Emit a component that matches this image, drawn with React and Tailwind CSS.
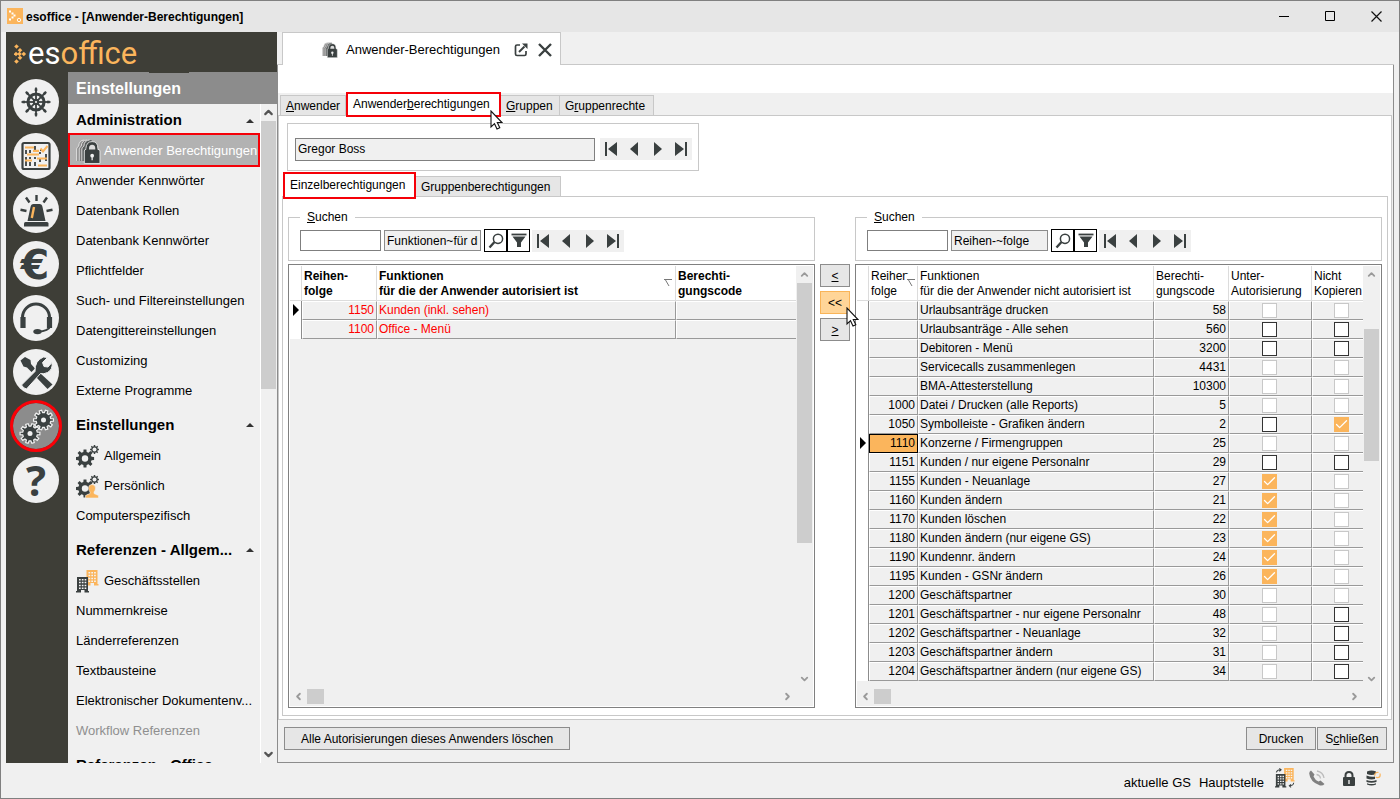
import React from "react";
import { Check, ChevronUp, ChevronDown, ChevronLeft, ChevronRight } from "lucide-react";

const DARK = "#3a4040";
const ORANGE = "#fbb55c";

function gearPath(cx, cy, outer, inner, teeth) {
  const pts = [];
  for (let i = 0; i < teeth; i++) {
    const a = (i * 2 * Math.PI) / teeth;
    const s = Math.PI / teeth;
    [
      [inner, -0.62],
      [outer, -0.4],
      [outer, 0.4],
      [inner, 0.62],
    ].forEach(([r, k]) => {
      pts.push(`${(cx + r * Math.cos(a + k * s)).toFixed(2)} ${(cy + r * Math.sin(a + k * s)).toFixed(2)}`);
    });
  }
  return `M${pts.join("L")}Z`;
}

function Gear({ cx, cy, r, hole, teeth = 8, fill = DARK, holeFill = "#f0f0f0", stroke = "none" }) {
  return (
    <>
      <path d={gearPath(cx, cy, r, r * 0.74, teeth)} fill={fill} stroke={stroke} strokeWidth="1.2" />
      <circle cx={cx} cy={cy} r={hole} fill={holeFill} />
    </>
  );
}

/* ---------- module icons ---------- */

function WheelIcon() {
  return (
    <g stroke={DARK} fill="none">
      <circle cx="23" cy="23" r="8" strokeWidth="3.2" />
      {[0, 45, 90, 135, 180, 225, 270, 315].map((a) => (
        <g key={a} transform={`rotate(${a} 23 23)`}>
          <path d="M23 21V8.500" strokeWidth="1.8" />
          <path d="M23 12V9.500" strokeWidth="2.6" />
        </g>
      ))}
      <circle cx="23" cy="23" r="3.2" fill={DARK} stroke="none" />
      <circle cx="23" cy="23" r="1.1" fill="#f0f0f0" stroke="none" />
    </g>
  );
}

function PlanIcon() {
  return (
    <g fill="none">
      <rect x="9.500" y="10" width="27" height="26" rx="1.500" stroke={DARK} strokeWidth="2.200" />
      <path d="M13 17V21M13 24V33M17 17V20M17 24V26M17 29V33M22 13V18M22 24V26M22 29V33M27 19V21M27 26V29M33 21V28M29 17H27" stroke={DARK} strokeWidth="1.800" />
      <path d="M12 14.500H21M14 21.500H26M24 25.500H34M12 27.500H19M25 32.500H34M20 17.800H26" stroke={ORANGE} strokeWidth="2.200" />
      <path d="M27.500 15.500L30 18.500L34.500 13" stroke={ORANGE} strokeWidth="2" />
    </g>
  );
}

function SirenIcon() {
  return (
    <g>
      <path d="M11 39.500V36.500Q11 35 12.500 35H34Q35.500 35 35.500 36.500V39.500Z" fill={DARK} />
      <path d="M14.500 34L17.500 20Q18 17 20.500 17H26.500Q29 17 29.500 20L32.500 34Z" fill={DARK} />
      <path d="M21 20L18.800 31" stroke={ORANGE} strokeWidth="2.400" />
      <path d="M23.500 14V8M16.500 15.500L13 10.500M30.500 15.500L34 10.500M13.500 24L7.500 22.800M33.500 24L39.500 22.800" stroke={DARK} strokeWidth="2.400" />
    </g>
  );
}

function EuroIcon() {
  return (
    <text x="22" y="38" textAnchor="middle" fontSize="41" fontWeight="700" fontFamily="'DejaVu Sans', sans-serif" fill={DARK}>
      €
    </text>
  );
}

function HeadsetIcon() {
  return (
    <g fill="none" stroke={DARK}>
      <path d="M9.500 24V22.500A13.500 13.500 0 0 1 36.500 22.500V24" strokeWidth="3" />
      <path d="M10 22V33M36.500 22V33" strokeWidth="5.200" />
      <path d="M37.500 31Q35.500 36 25 36.800" strokeWidth="2" />
      <ellipse cx="24.500" cy="36.600" rx="4.200" ry="2.600" fill={DARK} stroke="none" />
    </g>
  );
}

function ToolsIcon() {
  return (
    <g>
      <path d="M7.500 11.500L12 8L17.500 11L18 15L22 19.500L18.500 23L14 18.500L10.500 17.500Z" fill={DARK} />
      <path d="M27 24L39.500 35.500L34.500 40L23 28Z" fill={DARK} />
      <path d="M8.500 36L22 22.500Q21.500 11.500 30.500 8L34.500 8.500L29.500 13.500L31 17.500L35 18L39 13.500Q40 20.500 34.500 23.500Q30.500 25.500 27.500 24.500L13.500 40Q10.500 39.500 8.500 36Z" fill={DARK} stroke="#f0f0f0" strokeWidth="1" />
    </g>
  );
}

function GearsIcon() {
  return (
    <g>
      <Gear cx={30.5} cy={17} r={10} hole={2.5} teeth={10} stroke="#f0f0f0" />
      <Gear cx={17} cy={30.5} r={10} hole={2.5} teeth={10} stroke="#f0f0f0" />
    </g>
  );
}

function HelpIcon() {
  return (
    <text x="23" y="39" textAnchor="middle" fontSize="42" fontWeight="700" fontFamily="'Open Sans', sans-serif" fill={DARK}>
      ?
    </text>
  );
}

const modules = [
  { name: "Steuerung", Icon: WheelIcon },
  { name: "Planung", Icon: PlanIcon },
  { name: "Alarm", Icon: SirenIcon },
  { name: "Finanzen", Icon: EuroIcon },
  { name: "Service", Icon: HeadsetIcon },
  { name: "Werkzeuge", Icon: ToolsIcon },
  { name: "Einstellungen", Icon: GearsIcon, active: true },
  { name: "Hilfe", Icon: HelpIcon },
];

function ModuleBar() {
  return (
    <nav className="flex w-[62px] shrink-0 flex-col items-center gap-2 pt-[7px] pr-[2px]">
      {modules.map(({ name, Icon, active }) => (
        <button
          key={name}
          aria-label={name}
          className={
            active
              ? "size-[46px] shrink-0 rounded-full bg-[#8c8c8c] outline-3 outline-[#fb0007]"
              : "size-[46px] shrink-0 rounded-full bg-[#f0f0f0]"
          }
        >
          <svg viewBox="0 0 46 46" className="size-[46px] overflow-visible">
            <Icon />
          </svg>
        </button>
      ))}
    </nav>
  );
}

/* ---------- small icons ---------- */

function LockStack({ className }) {
  return (
    <svg viewBox="0 0 24 24" className={className}>
      {[
        [0, "#8c8c8c"],
        [2.5, "#777777"],
        [5, "#5a5f5f"],
      ].map(([dx, c]) => (
        <g key={dx}>
          <path d={`M${dx + 0.6} 21V9.500Q${dx + 0.8} 8 ${dx + 2.5} 7Q${dx + 3} 1 ${dx + 8} 1H${dx + 10}V21Z`} fill={c} />
          <path d={`M${dx + 0.6} 21V9.500Q${dx + 0.8} 8 ${dx + 2.5} 7Q${dx + 3} 1 ${dx + 8} 1`} fill="none" stroke="#e4e4e4" strokeWidth="0.9" />
        </g>
      ))}
      <path d="M8 23.500V11.500Q8 10 9.500 10V9Q10 2.500 15.500 2.500T21 9V10Q23 10 23 11.500V23.500Z" fill={DARK} stroke="#f0f0f0" strokeWidth="0.800" />
      <path d="M12.500 10V9Q12.500 5.500 15.500 5.500T18.500 9V10Z" fill="#dcdcdc" />
      <circle cx="15.500" cy="16" r="1.800" fill="#f0f0f0" />
      <path d="M14.900 16H16.100V20.500H14.900Z" fill="#f0f0f0" />
    </svg>
  );
}

function SettingsSmall({ person }) {
  return (
    <svg viewBox="0 0 23 23" className="size-[23px]">
      <Gear cx={9} cy={13.5} r={9.2} hole={3.2} />
      <Gear cx={18.5} cy={4.5} r={4.5} hole={2} />
      {person && (
        <path d="M16 9.500Q19.500 9.500 19.500 13Q19.500 15.500 18 17V18.500L22.500 20.500V23H9.500V20.500L14 18.500V17Q12.500 15.500 12.500 13Q12.500 9.500 16 9.500Z" fill={ORANGE} stroke="#f0f0f0" strokeWidth="0.600" />
      )}
    </svg>
  );
}

function Building({ x, y, fill }) {
  return (
    <g transform={`translate(${x} ${y})`}>
      <path d="M1 0H12V14H13V15.500H8.500V13H5V15.500H0V14H1Z" fill={fill} />
      <path d="M3 2.800H10.500M3 5.600H10.500M3 8.400H10.500M3 11.200H10.500" stroke="#f4f4f4" strokeWidth="1.500" strokeDasharray="1.700 1.100" />
    </g>
  );
}

function Buildings({ arrows }) {
  return (
    <svg viewBox="0 0 23 23" className={arrows ? "size-[20px]" : "size-[23px]"}>
      <Building x={9.5} y={0} fill={ORANGE} />
      <Building x={0} y={7} fill={DARK} />
      {arrows && <path d="M1.500 5Q2.500 2 6 2M5 0.500L7 2L5 3.800M21.500 17Q21 20.500 17 20.500M18.500 18.800L16.500 20.500L18.500 22.200" fill="none" stroke={DARK} strokeWidth="1.200" />}
    </svg>
  );
}

function Cursor({ className }) {
  return (
    <svg viewBox="0 0 13 20" className={className} aria-hidden="true">
      <path d="M1 1V17L4.500 13.700L7 19L9.800 17.700L7.300 12.500H12Z" fill="#fff" stroke="#111" strokeWidth="1.100" />
    </svg>
  );
}

/* ---------- sidebar ---------- */

const sections = [
  {
    title: "Administration",
    first: true,
    items: [
      { label: "Anwender Berechtigungen", icon: <LockStack className="size-[25px]" />, active: true },
      { label: "Anwender Kennwörter" },
      { label: "Datenbank Rollen" },
      { label: "Datenbank Kennwörter" },
      { label: "Pflichtfelder" },
      { label: "Such- und Filtereinstellungen" },
      { label: "Datengittereinstellungen" },
      { label: "Customizing" },
      { label: "Externe Programme" },
    ],
  },
  {
    title: "Einstellungen",
    items: [
      { label: "Allgemein", icon: <SettingsSmall /> },
      { label: "Persönlich", icon: <SettingsSmall person /> },
      { label: "Computerspezifisch" },
    ],
  },
  {
    title: "Referenzen - Allgem...",
    items: [
      { label: "Geschäftsstellen", icon: <Buildings /> },
      { label: "Nummernkreise" },
      { label: "Länderreferenzen" },
      { label: "Textbausteine" },
      { label: "Elektronischer Dokumentenv..." },
      { label: "Workflow Referenzen", muted: true },
    ],
  },
  { title: "Referenzen - Office", items: [] },
];

function NavItem({ label, icon, active, muted }) {
  if (active) {
    return (
      <a href="#berechtigungen" className="-my-[2px] flex h-[34px] shrink-0 items-center border-2 border-[#f50008] bg-[#b2b2b2] pt-[2px] pl-[6px] whitespace-nowrap text-white">
        <span className="flex w-7 shrink-0">{icon}</span>
        {label}
      </a>
    );
  }
  return (
    <a href="#eintrag" className={muted ? "flex h-[30px] shrink-0 items-center pt-[2px] pl-2 whitespace-nowrap text-[#8f8f8f]" : "flex h-[30px] shrink-0 items-center pt-[2px] pl-2 whitespace-nowrap"}>
      {icon && <span className="flex w-7 shrink-0">{icon}</span>}
      {label}
    </a>
  );
}

function Sidebar() {
  return (
    <aside className="flex w-[271px] shrink-0 flex-col bg-[#3e3e37]">
      <div className="flex h-10 shrink-0 items-center pt-1 pl-2">
        <svg viewBox="0 0 14 20" className="h-5 w-[14px]">
          {[[2.5, 2.5], [2.5, 17.5], [6, 6.2], [6, 13.8], [9.8, 10], [5.5, 10], [2, 10]].map(([x, y], i) => (
            <path key={i} d={`M${x - 2.3} ${y}L${x} ${y - 2.3}L${x + 2.3} ${y}L${x} ${y + 2.3}Z`} fill={ORANGE} />
          ))}
        </svg>
        <span className="font-[Roboto,sans-serif] text-[31px] leading-9 font-normal text-white">
          es<span className="text-[#fbb55c]">office</span>
        </span>
      </div>
      <div className="flex min-h-0 flex-1">
        <ModuleBar />
        <div className="flex min-w-0 flex-1 flex-col bg-[#f0f0f0]">
          <h1 className="relative flex h-8 shrink-0 items-center bg-[#8c8c8c] pt-[2px] pl-2 text-base font-bold text-white">
            Einstellungen
            <span className="absolute top-0 left-[81px] h-px w-10 bg-[#3e3e37]" />
          </h1>
          <div className="flex min-h-0 flex-1">
            <div className="flex min-w-0 flex-1 flex-col overflow-hidden border-r border-white text-[13px]">
              {sections.map((s) => (
                <React.Fragment key={s.title}>
                  <button
                    className={
                      s.first
                        ? "flex h-[31px] shrink-0 items-center justify-between pt-[2px] pr-[6px] pl-2 text-[15px] font-bold"
                        : "flex h-[35px] shrink-0 items-center justify-between pt-[5px] pr-[6px] pl-2 text-[15px] font-bold whitespace-nowrap"
                    }
                  >
                    {s.title}
                    <svg viewBox="0 0 8 4" className="h-1 w-2">
                      <path d="M0 4L4 0L8 4Z" fill="#333" />
                    </svg>
                  </button>
                  {s.items.map((it) => (
                    <NavItem key={it.label} {...it} />
                  ))}
                </React.Fragment>
              ))}
            </div>
            <div className="flex w-4 shrink-0 flex-col text-[#555]">
              <ChevronUp className="ml-px h-[17px] w-[13px] shrink-0" strokeWidth={4} />
              <div className="h-[268px] w-[15px] bg-[#cdcdcd]" />
              <ChevronDown className="mt-auto ml-px h-[17px] w-[13px] shrink-0" strokeWidth={4} />
            </div>
          </div>
        </div>
      </div>
    </aside>
  );
}

/* ---------- shared controls ---------- */

function RecordNav() {
  const shapes = [
    ["Erster", "M5 4H7V18H5ZM17 4V18L8 11Z"],
    ["Zurück", "M15 4V18L7 11Z"],
    ["Weiter", "M8 4V18L16 11Z"],
    ["Letzter", "M16 4H18V18H16ZM6 4V18L15 11Z"],
  ];
  return (
    <div className="flex shrink-0 bg-[#f0f0f0]">
      {shapes.map(([label, d]) => (
        <button key={label} aria-label={label} className="h-[22px] w-[23px]">
          <svg viewBox="0 0 23 22" className="h-[22px] w-[23px]">
            <path d={d} fill={DARK} />
          </svg>
        </button>
      ))}
    </div>
  );
}

function SearchBox({ id, field }) {
  return (
    <fieldset className="min-w-0 border border-[#c8c8c8] px-[11px] pt-[5px] pb-2">
      <legend className="px-[7px] leading-[14px]">
        <label htmlFor={id}>
          <u>S</u>uchen
        </label>
      </legend>
      <div className="flex items-center">
        <input id={id} className="h-[21px] w-[81px] border border-[#7f7f7f] bg-white px-[2px]" />
        <input aria-label="Suchfeld" readOnly value={field} className="ml-[3px] h-[21px] w-[97px] border border-[#8c8c8c] bg-[#f0f0f0] px-[2px]" />
        <button aria-label="Suchen" className="ml-[3px] flex h-[23px] w-[23px] items-center justify-center border border-black bg-white">
          <svg viewBox="0 0 16 16" className="size-4">
            <circle cx="10" cy="5.800" r="4.600" fill="none" stroke={DARK} strokeWidth="1.500" />
            <path d="M6.500 9L1.500 14.500" stroke={DARK} strokeWidth="2.400" />
          </svg>
        </button>
        <button aria-label="Filter" className="mr-[2px] flex h-[23px] w-[23px] items-center justify-center border border-black bg-white">
          <svg viewBox="0 0 16 16" className="size-4">
            <path d="M0.500 1.500H15.500" stroke={DARK} strokeWidth="1.800" />
            <path d="M1.500 3.500H14.500L10 9.500V14H6V9.500Z" fill={DARK} />
          </svg>
        </button>
        <RecordNav />
      </div>
    </fieldset>
  );
}

function GridFrame({ thumbClass, children }) {
  return (
    <div className="mt-[3px] flex min-h-0 flex-1 flex-col border border-[#808080] bg-white p-px">
      <div className="flex min-h-0 flex-1">
        <div className="min-w-0 flex-1 overflow-hidden bg-[#f0f0f0]">{children}</div>
        <div className="flex w-[17px] shrink-0 flex-col items-center bg-[#f0f0f0] text-[#9a9a9a]">
          <ChevronUp className="h-[17px] w-[11px] shrink-0" strokeWidth={4} />
          <div className={thumbClass} />
          <ChevronDown className="mt-auto h-4 w-[11px] shrink-0" strokeWidth={4} />
        </div>
      </div>
      <div className="flex h-[19px] shrink-0 items-center bg-[#f0f0f0] pr-[17px] text-[#9a9a9a]">
        <ChevronLeft className="h-[11px] w-[17px]" strokeWidth={4} />
        <div className="h-[15px] w-[17px] bg-[#cdcdcd]" />
        <ChevronRight className="ml-auto h-[11px] w-[17px]" strokeWidth={4} />
      </div>
    </div>
  );
}

function SortMark({ className }) {
  return (
    <svg viewBox="0 0 10 14" className={className} aria-hidden="true">
      <path d="M1 5.500H9M2.500 6L6 12" fill="none" stroke="#777" strokeWidth="1" />
    </svg>
  );
}

function Head({ lines, bold, last, children }) {
  return (
    <th
      className={
        (bold ? "font-bold " : "font-normal ") +
        (last ? "" : "border-r ") +
        "relative h-[35px] overflow-hidden border-b border-[#dcdcdc] bg-white p-0 pt-[2px] pl-[2px] text-left leading-[15px] whitespace-nowrap"
      }
    >
      {lines[0]}
      <br />
      {lines[1]}
      {children}
    </th>
  );
}

function Marker({ on }) {
  return (
    <td className="border-r border-[#8c8c8c] bg-white p-0">
      {on && (
        <svg viewBox="0 0 6 12" className="mb-[2px] ml-[3px] h-3 w-[6px]">
          <path d="M0 0L6 6L0 12Z" fill="#000" />
        </svg>
      )}
    </td>
  );
}

const cell = "h-[19px] overflow-hidden border-t border-r border-b border-l border-t-white border-r-[#999] border-b-[#999] border-l-white p-0 leading-[17px] whitespace-nowrap ";
const lastCell = "h-[19px] overflow-hidden border-t border-b border-l border-t-white border-b-[#999] border-l-white p-0 leading-[17px] whitespace-nowrap ";

/* ---------- authorised functions ---------- */

const granted = [
  ["1150", "Kunden (inkl. sehen)"],
  ["1100", "Office - Menü"],
];

function GrantedGrid() {
  return (
    <GridFrame thumbClass="h-[260px] w-[15px] bg-[#cdcdcd]">
      <table className="w-full table-fixed border-separate border-spacing-0">
        <colgroup>
          <col className="w-3" />
          <col className="w-[75px]" />
          <col />
          <col className="w-[120px]" />
        </colgroup>
        <thead>
          <tr>
            <Head lines={["", ""]} />
            <Head bold lines={["Reihen-", "folge"]} />
            <Head bold lines={["Funktionen", "für die der Anwender autorisiert ist"]}>
              <SortMark className="absolute top-2 right-[2px] h-[14px] w-[10px]" />
            </Head>
            <Head bold last lines={["Berechti-", "gungscode"]} />
          </tr>
        </thead>
        <tbody className="text-[#ff0000]">
          {granted.map(([nr, name], i) => (
            <tr key={nr}>
              <Marker on={i === 0} />
              <td className={cell + "pr-[2px] text-right"}>{nr}</td>
              <td className={cell + "pl-px"}>{name}</td>
              <td className={lastCell} />
            </tr>
          ))}
        </tbody>
      </table>
    </GridFrame>
  );
}

/* ---------- remaining functions: "-" locked, "o" open, "x" ticked ---------- */

const remaining = [
  ["", "Urlaubsanträge drucken", "58", "-", "-"],
  ["", "Urlaubsanträge - Alle sehen", "560", "o", "o"],
  ["", "Debitoren - Menü", "3200", "o", "o"],
  ["", "Servicecalls zusammenlegen", "4431", "-", "-"],
  ["", "BMA-Attesterstellung", "10300", "-", "-"],
  ["1000", "Datei / Drucken (alle Reports)", "5", "-", "-"],
  ["1050", "Symbolleiste - Grafiken ändern", "2", "o", "x"],
  ["1110", "Konzerne / Firmengruppen", "25", "-", "-"],
  ["1151", "Kunden / nur eigene Personalnr", "29", "o", "o"],
  ["1155", "Kunden - Neuanlage", "27", "x", "-"],
  ["1160", "Kunden ändern", "21", "x", "-"],
  ["1170", "Kunden löschen", "22", "x", "-"],
  ["1180", "Kunden ändern (nur eigene GS)", "23", "x", "-"],
  ["1190", "Kundennr. ändern", "24", "x", "-"],
  ["1195", "Kunden - GSNr ändern", "26", "x", "-"],
  ["1200", "Geschäftspartner", "30", "-", "-"],
  ["1201", "Geschäftspartner - nur eigene Personalnr", "48", "-", "o"],
  ["1202", "Geschäftspartner - Neuanlage", "32", "-", "o"],
  ["1203", "Geschäftspartner ändern", "31", "-", "o"],
  ["1204", "Geschäftspartner ändern (nur eigene GS)", "34", "-", "o"],
];

function Tick({ state, label }) {
  return (
    <span className="relative block size-[15px]">
      <input
        type="checkbox"
        aria-label={label}
        defaultChecked={state === "x"}
        disabled={state === "-"}
        className="peer block size-[15px] appearance-none border border-[#333] bg-white checked:border-[#fbb55c] checked:bg-[#fbb55c] disabled:border-[#c8c8c8]"
      />
      <Check className="pointer-events-none absolute inset-0 hidden size-[15px] text-white peer-checked:block" strokeWidth={2} />
    </span>
  );
}

function RemainingGrid() {
  return (
    <GridFrame thumbClass="mt-[46px] h-[132px] w-[15px] bg-[#cdcdcd]">
      <table className="w-full table-fixed border-separate border-spacing-0">
        <colgroup>
          <col className="w-3" />
          <col className="w-[49px]" />
          <col />
          <col className="w-[75px]" />
          <col className="w-[83px]" />
          <col className="w-[51px]" />
        </colgroup>
        <thead>
          <tr>
            <Head lines={["", ""]} />
            <Head lines={["Reihen-", "folge"]}>
              <SortMark className="absolute top-2 right-px h-[14px] w-[10px] bg-white" />
            </Head>
            <Head lines={["Funktionen", "für die der Anwender nicht autorisiert ist"]} />
            <Head lines={["Berechti-", "gungscode"]} />
            <Head lines={["Unter-", "Autorisierung"]} />
            <Head last lines={["Nicht", "Kopieren"]} />
          </tr>
        </thead>
        <tbody>
          {remaining.map(([nr, name, code, sub, copy]) => {
            const current = nr === "1110";
            return (
              <tr key={code}>
                <Marker on={current} />
                <td className={cell + (current ? "bg-[#fbb55c] pr-[2px] text-right outline-1 -outline-offset-1 outline-black" : "pr-[2px] text-right")}>{nr}</td>
                <td className={cell + "pl-px"}>{name}</td>
                <td className={cell + "pr-[2px] text-right"}>{code}</td>
                <td className={cell + "pl-8"}>
                  <Tick state={sub} label={"Unterautorisierung " + name} />
                </td>
                <td className={lastCell + "pl-[21px]"}>
                  <Tick state={copy} label={"Nicht kopieren " + name} />
                </td>
              </tr>
            );
          })}
        </tbody>
      </table>
    </GridFrame>
  );
}

/* ---------- work area ---------- */

const flatTab = "h-5 border-t border-r border-[#c8c8c8] bg-[#e6e6e6] px-[5px] text-left whitespace-nowrap";
const moveButton = "h-[23px] w-[30px] border border-[#8c8c8c] bg-[#e6e6e6]";
const pushButton = "h-[23px] border border-[#8c8c8c] bg-[#e6e6e6] whitespace-nowrap";

function WorkArea() {
  return (
    <main className="flex min-w-0 flex-1 flex-col text-xs">
      <div className="flex h-[33px] shrink-0 border-b border-[#c8c8c8] pl-[5px]">
        <div className="-mb-px flex items-center border-t border-r border-l border-[#c8c8c8] bg-white pt-[2px] pr-2 pl-[39px] text-[13px]">
          <LockStack className="size-4" />
          <span className="mr-[14px] ml-2">Anwender-Berechtigungen</span>
          <button aria-label="Abdocken" className="mr-[10px]">
            <svg viewBox="0 0 14 14" className="size-[14px]">
              <path d="M6 2H3Q1.500 2 1.500 3.500V11Q1.500 12.500 3 12.500H10.500Q12 12.500 12 11V8" fill="none" stroke={DARK} strokeWidth="1.700" />
              <path d="M5 9L10.500 3.500" stroke={DARK} strokeWidth="2" />
              <path d="M8 0.500H13.500V6Z" fill={DARK} />
            </svg>
          </button>
          <button aria-label="Tab schließen">
            <svg viewBox="0 0 14 14" className="size-[14px]">
              <path d="M1 1L13 13M13 1L1 13" stroke={DARK} strokeWidth="2.400" />
            </svg>
          </button>
        </div>
      </div>

      <div className="flex min-h-0 flex-1 flex-col border-r border-b border-l border-[#8c8c8c]">
        <div className="h-7 shrink-0 bg-white" />
        <div className="flex h-[22px] shrink-0 items-end pl-[2px]">
          <button className={flatTab + " w-[66px] border-l"}>
            <u>A</u>nwender
          </button>
          <button className="relative -mt-px -mb-[2px] h-[25px] w-[155px] border-2 border-[#f50008] bg-white pb-px pl-[5px] text-left whitespace-nowrap">
            Anwender<u>b</u>erechtigungen
            <Cursor className="absolute top-[16px] left-[142px] z-10 h-5 w-[13px]" />
          </button>
          <button className={flatTab + " w-[59px]"}>
            <u>G</u>ruppen
          </button>
          <button className={flatTab + " w-[94px]"}>
            G<u>r</u>uppenrechte
          </button>
        </div>

        <div className="mr-px flex min-h-0 flex-1 flex-col border border-[#c8c8c8] bg-white pt-[7px] pr-[3px] pb-[3px] pl-[3px]">
          <div className="ml-[5px] flex h-12 w-[412px] shrink-0 items-center border border-[#c8c8c8] pt-1 pl-[7px]">
            <input aria-label="Anwender" readOnly value="Gregor Boss" className="mr-[5px] h-[23px] w-[300px] border border-[#808080] bg-[#f0f0f0] px-[2px]" />
            <RecordNav />
          </div>

          <div className="mt-px flex h-6 shrink-0 items-end pl-px">
            <button className="relative -mb-[3px] h-[27px] w-[133px] border-2 border-[#f50008] bg-white pb-[2px] pl-[5px] text-left whitespace-nowrap">Einzelberechtigungen</button>
            <button className={flatTab + " w-[145px]"}>Gruppenberechtigungen</button>
          </div>

          <div className="flex min-h-0 flex-1 gap-[5px] border border-[#c8c8c8] px-[5px] pt-[13px] pb-[7px]">
            <section className="flex min-w-0 flex-1 flex-col">
              <SearchBox id="suche-links" field="Funktionen~für die der Anwender autorisiert ist" />
              <GrantedGrid />
            </section>
            <div className="flex shrink-0 flex-col gap-1 pt-[54px]">
              <button className={moveButton}>
                <u>&lt;</u>
              </button>
              <button className="relative h-[23px] w-[30px] border border-[#f9b458] bg-[#ffd598]">
                &lt;&lt;
                <Cursor className="absolute top-[15px] left-[25px] z-10 h-5 w-[13px]" />
              </button>
              <button className={moveButton}>
                <u>&gt;</u>
              </button>
            </div>
            <section className="flex min-w-0 flex-1 flex-col">
              <SearchBox id="suche-rechts" field="Reihen-~folge" />
              <RemainingGrid />
            </section>
          </div>
        </div>

        <div className="flex h-[42px] shrink-0 items-center pr-[6px] pb-[5px] pl-[6px]">
          <button className={pushButton + " mr-auto px-4"}>Alle Autorisierungen dieses Anwenders löschen</button>
          <button className={pushButton + " mr-px w-[70px]"}>Drucken</button>
          <button className={pushButton + " w-[70px]"}>
            S<u>c</u>hließen
          </button>
        </div>
      </div>
    </main>
  );
}

/* ---------- window ---------- */

function TitleBar() {
  return (
    <header className="flex h-[31px] shrink-0 items-center bg-[#e6e6e6] pl-[6px] text-xs font-bold">
      <svg viewBox="0 0 16 16" className="mr-[3px] mb-[2px] size-4">
        <rect width="16" height="16" fill={ORANGE} />
        <path d="M2 3.500h2M2 11.500h2M4.500 5.500h2M4.500 9.500h2M6.500 7.500h2" stroke="#fff" strokeWidth="2" />
        <circle cx="12" cy="12" r="1.700" fill="none" stroke="#fff" strokeWidth="0.900" />
      </svg>
      <span className="mr-auto">esoffice - [Anwender-Berechtigungen]</span>
      <button aria-label="Minimieren" className="flex h-full w-[46px] items-center justify-center">
        <svg viewBox="0 0 11 11" className="size-[11px]">
          <path d="M0 5.500H10" stroke="#000" />
        </svg>
      </button>
      <button aria-label="Maximieren" className="flex h-full w-[46px] items-center justify-center">
        <svg viewBox="0 0 11 11" className="size-[11px]">
          <path d="M0.500 0.500H9.500V9.500H0.500Z" fill="none" stroke="#000" />
        </svg>
      </button>
      <button aria-label="Schließen" className="flex h-full w-[46px] items-center justify-center">
        <svg viewBox="0 0 11 11" className="size-[11px]">
          <path d="M0.500 0.500L10.500 10.500M10.500 0.500L0.500 10.500" stroke="#111" strokeWidth="1.200" />
        </svg>
      </button>
    </header>
  );
}

function StatusBar() {
  return (
    <footer className="flex h-[35px] shrink-0 items-center justify-end pr-[18px] pb-[5px] text-[13px]">
      <span className="mt-[10px] mr-2">aktuelle GS</span>
      <span className="mt-[10px] mr-[11px]">Hauptstelle</span>
      <Buildings arrows />
      <svg viewBox="0 0 16 16" className="mr-[18px] ml-[14px] size-4">
        <path d="M2 0.500L5.500 4.500L4.500 6.500Q6 10 9.500 11.500L11.500 10.500L15.500 14Q14 16 11 15.500Q1 12 0.200 3.500Q0.200 1.500 2 0.500Z" fill="#808080" />
        <path d="M7.500 4.500Q11 5 11.500 8.500M8 1Q14 2 15 8" fill="none" stroke="#bcbcbc" strokeWidth="1.300" />
      </svg>
      <svg viewBox="0 0 12 15" className="mr-[11px] h-[15px] w-3">
        <path d="M2.500 7V4.500Q2.500 1 6 1T9.500 4.500V7" fill="none" stroke={DARK} strokeWidth="2" />
        <rect x="0" y="6" width="12" height="9" rx="1" fill={DARK} />
        <path d="M5.300 9H6.700V13H5.300Z" fill="#f0f0f0" />
      </svg>
      <svg viewBox="0 0 15 16" className="h-4 w-[15px]">
        <path d="M1 1.500Q5.500 -0.500 10 1.500V4Q5.500 6 1 4ZM0.500 5.500Q5.500 7.500 9 6.500V9Q5 10 0.500 8.500ZM0.500 10Q5.500 12 10.500 10V12Q5.500 13.500 0.500 12ZM1 13.200Q5.500 15 10 13.200V14.500Q5.500 16.500 1 14.500Z" fill={DARK} />
        <circle cx="11.500" cy="5" r="2.700" fill="#f0f0f0" stroke={ORANGE} strokeWidth="1.200" strokeDasharray="6 1.500" />
      </svg>
    </footer>
  );
}

export default function App() {
  return (
    <div className="flex h-screen flex-col overflow-hidden border border-[#808080] bg-[#f0f0f0] font-['Liberation_Sans',Arial,sans-serif] text-black">
      <TitleBar />
      <div className="flex min-h-0 flex-1 pr-[5px] pl-[5px]">
        <Sidebar />
        <WorkArea />
      </div>
      <StatusBar />
    </div>
  );
}
